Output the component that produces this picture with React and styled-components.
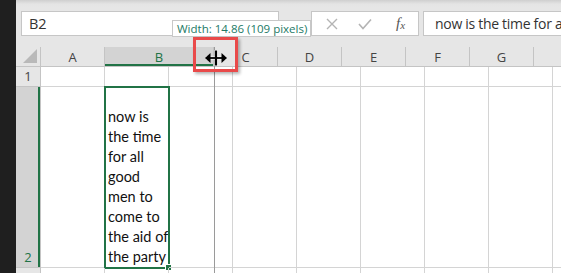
import styled, { createGlobalStyle } from "styled-components";

const GlobalStyle = createGlobalStyle`
  html, body {
    margin: 0;
    padding: 0;
    background: #ffffff;
    overflow: hidden;
  }
  body {
    font-family: "Lato", "Noto Sans", sans-serif;
  }
`;

const headerCols = ["A", "B", "C", "D", "E", "F", "G", ""];
const headerWidths = [64, 109, 64, 64, 64, 64, 64, 40];
const cellCols = ["A", "B", "C", "D", "E", "F", "G", "H", "I"];

const lines = [
  "now is",
  "the time",
  "for all",
  "good",
  "men to",
  "come to",
  "the aid of",
  "the party",
];

function App() {
  return (
    <>
      <GlobalStyle />
      <Screen>
        <DarkStrip />
        <Main>
          <Toolbar>
            <NameBox>B2</NameBox>
            <FormulaButtons>
              <IconButton>
                <svg width="14" height="14" viewBox="0 0 14 14">
                  <path d="M2 2 L12 12 M12 2 L2 12" stroke="#b4b4b4" strokeWidth="1.4" fill="none" />
                </svg>
              </IconButton>
              <IconButton>
                <svg width="16" height="14" viewBox="0 0 16 14">
                  <path d="M2 7 L6 11.5 L14 2.5" stroke="#b4b4b4" strokeWidth="1.6" fill="none" />
                </svg>
              </IconButton>
              <Fx>
                f<sub>x</sub>
              </Fx>
            </FormulaButtons>
            <FormulaInput>now is the time for a</FormulaInput>
          </Toolbar>

          <HeaderRow>
            <Corner>
              <svg width="14" height="14" viewBox="0 0 14 14">
                <path d="M14 0 L14 14 L0 14 Z" fill="#b9b9b9" />
              </svg>
            </Corner>
            {headerCols.map((c, i) => (
              <ColHeader key={i} $w={headerWidths[i]} $active={c === "B"}>
                {c}
              </ColHeader>
            ))}
          </HeaderRow>

          <Sheet>
            <Row $h={20}>
              <RowHeader>1</RowHeader>
              {cellCols.map((c) => (
                <Cell key={c} />
              ))}
            </Row>
            <Row $h={181}>
              <RowHeader $active>2</RowHeader>
              {cellCols.map((c) => (
                <Cell key={c}>
                  {c === "B" && (
                    <>
                      <WrapText>
                        {lines.map((l) => (
                          <div key={l}>{l}</div>
                        ))}
                      </WrapText>
                      <Selection />
                      <FillHandle />
                    </>
                  )}
                </Cell>
              ))}
            </Row>
            <Row $h={20}>
              <RowHeader />
              {cellCols.map((c) => (
                <Cell key={c} />
              ))}
            </Row>
            <DragLine />
          </Sheet>

          <Tooltip>Width: 14.86 (109 pixels)</Tooltip>
          <Highlight />
          <ResizeCursor>
            <svg width="24" height="18" viewBox="0 0 24 18">
              <g stroke="#ffffff" strokeWidth="3" fill="none">
                <path d="M12 1 V17 M2 9 H22" />
              </g>
              <path d="M12 1.5 V16.5" stroke="#000" strokeWidth="2.2" />
              <path d="M3 9 H21" stroke="#000" strokeWidth="1.8" />
              <path d="M1 9 L6.5 4 V14 Z" fill="#000" />
              <path d="M23 9 L17.5 4 V14 Z" fill="#000" />
            </svg>
          </ResizeCursor>
        </Main>
      </Screen>
    </>
  );
}

const Screen = styled.div`
  display: flex;
  width: 561px;
  height: 273px;
  overflow: hidden;
`;

const DarkStrip = styled.div`
  width: 16px;
  flex: none;
  background: #1f1f1f;
`;

const Main = styled.div`
  position: relative;
  flex: 1;
  display: flex;
  flex-direction: column;
  min-width: 0;
  overflow: hidden;
`;

const Toolbar = styled.div`
  flex: none;
  height: 47px;
  box-sizing: border-box;
  padding: 11px 0 0 5px;
  display: flex;
  align-items: flex-start;
  background: linear-gradient(#cfcfcf 0px, #e4e4e4 4px, #e6e6e6 8px);
`;

const NameBox = styled.div`
  width: 258px;
  height: 25px;
  flex: none;
  box-sizing: border-box;
  border: 1px solid #c6c6c6;
  background: #fff;
  font-family: "Open Sans", "Noto Sans", sans-serif;
  font-size: 14.5px;
  color: #333;
  padding: 2px 0 0 7px;
  margin-right: 32px;
`;

const FormulaButtons = styled.div`
  width: 108px;
  height: 25px;
  flex: none;
  box-sizing: border-box;
  border: 1px solid #c6c6c6;
  background: #fff;
  display: flex;
  align-items: center;
  padding-left: 12px;
  gap: 17px;
`;

const IconButton = styled.div`
  width: 16px;
  height: 16px;
  display: flex;
  align-items: center;
  justify-content: center;
`;

const Fx = styled.div`
  margin-left: 6px;
  font-family: "Liberation Serif", "DejaVu Serif", serif;
  font-style: italic;
  font-size: 15px;
  color: #555;
  sub {
    font-size: 11px;
    vertical-align: -1px;
  }
`;

const FormulaInput = styled.div`
  margin-left: 4px;
  flex: 1;
  min-width: 0;
  height: 25px;
  box-sizing: border-box;
  border: 1px solid #c6c6c6;
  border-right: none;
  background: #fff;
  font-family: "Open Sans", "Noto Sans", sans-serif;
  font-size: 14px;
  letter-spacing: -0.3px;
  color: #333;
  padding: 2px 0 0 11px;
  white-space: nowrap;
  overflow: hidden;
`;

const HeaderRow = styled.div`
  flex: none;
  height: 19px;
  display: flex;
  background: #e6e6e6;
  border-bottom: 1px solid #c4c4c4;
`;

const Corner = styled.div`
  width: 25px;
  flex: none;
  box-sizing: border-box;
  border-right: 1px solid #c4c4c4;
  display: flex;
  align-items: flex-end;
  justify-content: flex-end;
  padding: 0 3px 3px 0;
`;

const ColHeader = styled.div`
  width: ${(p) => p.$w}px;
  flex: none;
  box-sizing: border-box;
  border-right: 1px solid #c4c4c4;
  display: flex;
  align-items: center;
  justify-content: center;
  font-family: "Open Sans", "Noto Sans", sans-serif;
  font-size: 13px;
  color: ${(p) => (p.$active ? "#217346" : "#444")};
  background: ${(p) => (p.$active ? "#d3d3d3" : "transparent")};
  box-shadow: ${(p) => (p.$active ? "inset 0 -2px 0 #217346" : "none")};
  padding-top: 1px;
`;

const Sheet = styled.div`
  position: relative;
  flex: 1;
  min-height: 0;
  display: flex;
  flex-direction: column;
`;

const Row = styled.div`
  display: flex;
  height: ${(p) => p.$h}px;
  flex: none;
`;

const RowHeader = styled.div`
  width: 25px;
  flex: none;
  box-sizing: border-box;
  border-right: 1px solid #c4c4c4;
  border-bottom: 1px solid #c4c4c4;
  background: ${(p) => (p.$active ? "#d3d3d3" : "#e6e6e6")};
  box-shadow: ${(p) => (p.$active ? "inset -2px 0 0 #217346" : "none")};
  color: ${(p) => (p.$active ? "#217346" : "#444")};
  font-family: "Open Sans", "Noto Sans", sans-serif;
  font-size: 13px;
  display: flex;
  align-items: flex-end;
  justify-content: center;
  padding-bottom: 1px;
`;

const Cell = styled.div`
  position: relative;
  width: 64px;
  flex: none;
  box-sizing: border-box;
  border-right: 1px solid #d4d4d4;
  border-bottom: 1px solid #d4d4d4;
`;

const WrapText = styled.div`
  position: absolute;
  left: 3px;
  right: 0;
  bottom: 0;
  font-family: "Lato", "Noto Sans", sans-serif;
  font-size: 14.5px;
  line-height: 20px;
  color: #111;
  white-space: nowrap;
`;

const Selection = styled.div`
  position: absolute;
  left: -1px;
  top: -1px;
  right: -2px;
  bottom: -2px;
  border: 2px solid #217346;
`;

const FillHandle = styled.div`
  position: absolute;
  right: -4px;
  bottom: -4px;
  width: 5px;
  height: 5px;
  background: #217346;
  border: 1px solid #fff;
`;

const DragLine = styled.div`
  position: absolute;
  left: 198px;
  top: -20px;
  bottom: 0;
  width: 1px;
  background: #9a9a9a;
`;

const Tooltip = styled.div`
  position: absolute;
  left: 156px;
  top: 20px;
  height: 17px;
  box-sizing: border-box;
  padding: 0 3px 0 4px;
  background: #fff;
  border: 1px solid #c8c8c8;
  font-family: "Open Sans", "Noto Sans", sans-serif;
  font-size: 11.5px;
  line-height: 15px;
  color: #237a66;
  white-space: nowrap;
`;

const Highlight = styled.div`
  position: absolute;
  left: 177px;
  top: 37px;
  width: 45px;
  height: 35px;
  box-sizing: border-box;
  border: 3px solid #e94a4a;
  box-shadow: 2px 2px 3px rgba(0, 0, 0, 0.3);
`;

const ResizeCursor = styled.div`
  position: absolute;
  left: 188px;
  top: 49px;
  width: 24px;
  height: 18px;
`;

export default App;
